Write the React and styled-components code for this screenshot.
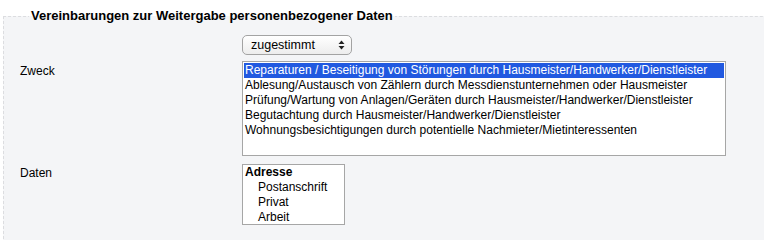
import React from 'react';
import styled, { createGlobalStyle } from 'styled-components';

const GlobalStyle = createGlobalStyle`
  html, body {
    margin: 0;
    padding: 0;
    background: #fff;
    overflow: hidden;
  }
  body {
    font-family: "Liberation Sans", Arial, sans-serif;
    font-size: 12px;
    color: #000;
  }
`;

const Page = styled.div`
  width: 764px;
  height: 240px;
  overflow: hidden;
  padding-top: 9px;
  box-sizing: border-box;
`;

const Fieldset = styled.fieldset`
  margin: 0 0 0 3px;
  padding: 2px 0 0 16px;
  width: 820px;
  min-height: 260px;
  border: 1px dashed #dcdde0;
  background: #f4f5f7;
  box-sizing: border-box;
`;

const Legend = styled.legend`
  margin-left: 9px;
  padding: 0 2px;
  font-weight: bold;
  font-size: 13px;
  line-height: 14px;
`;

const Row = styled.div`
  display: grid;
  grid-template-columns: 222px auto;
  align-items: start;
  margin-top: ${p => p.$gap || 0}px;
`;

const Label = styled.div`
  padding-top: ${p => p.$top || 0}px;
  line-height: 15px;
`;

const Dropdown = styled.div`
  width: 110px;
  height: 20px;
  box-sizing: border-box;
  border: 1px solid #a3a3a3;
  border-radius: 5px;
  background: linear-gradient(#ffffff, #ededed);
  display: flex;
  align-items: center;
  justify-content: space-between;
  padding: 0 6px 0 8px;
  font-size: 12.5px;
  line-height: 16px;
`;

const ListBox = styled.div`
  width: ${p => p.$w}px;
  height: ${p => p.$h}px;
  box-sizing: border-box;
  border: 1px solid #a6a6a6;
  background: #fff;
  padding: ${p => p.$pad || 0}px 1px 0;
  overflow: hidden;
`;

const Option = styled.div`
  height: 15px;
  line-height: 15px;
  padding-left: ${p => (p.$indent ? 14 : 1)}px;
  white-space: nowrap;
  background: ${p => (p.$selected ? '#2159e0' : 'transparent')};
  color: ${p => (p.$selected ? '#fff' : '#000')};
`;

const Group = styled(Option)`
  font-weight: bold;
`;

const Arrows = () => (
  <svg width="7" height="10" viewBox="0 0 7 10">
    <path d="M3.5 0.5 L6.5 4 L0.5 4 Z" fill="#222" />
    <path d="M3.5 9.5 L6.5 6 L0.5 6 Z" fill="#222" />
  </svg>
);

const purposes = [
  'Reparaturen / Beseitigung von Störungen durch Hausmeister/Handwerker/Dienstleister',
  'Ablesung/Austausch von Zählern durch Messdienstunternehmen oder Hausmeister',
  'Prüfung/Wartung von Anlagen/Geräten durch Hausmeister/Handwerker/Dienstleister',
  'Begutachtung durch Hausmeister/Handwerker/Dienstleister',
  'Wohnungsbesichtigungen durch potentielle Nachmieter/Mietinteressenten',
];

const App = () => (
  <Page>
    <GlobalStyle />
    <Fieldset>
      <Legend>Vereinbarungen zur Weitergabe personenbezogener Daten</Legend>
      <Row $gap={10}>
        <Label />
        <Dropdown>
          <span>zugestimmt</span>
          <Arrows />
        </Dropdown>
      </Row>
      <Row $gap={6}>
        <Label $top={3}>Zweck</Label>
        <ListBox $w={484} $h={95} $pad={1}>
          {purposes.map((p, i) => (
            <Option key={p} $selected={i === 0}>{p}</Option>
          ))}
        </ListBox>
      </Row>
      <Row $gap={8}>
        <Label $top={2}>Daten</Label>
        <ListBox $w={103} $h={61}>
          <Group>Adresse</Group>
          <Option $indent>Postanschrift</Option>
          <Option $indent>Privat</Option>
          <Option $indent>Arbeit</Option>
        </ListBox>
      </Row>
    </Fieldset>
  </Page>
);

export default App;
